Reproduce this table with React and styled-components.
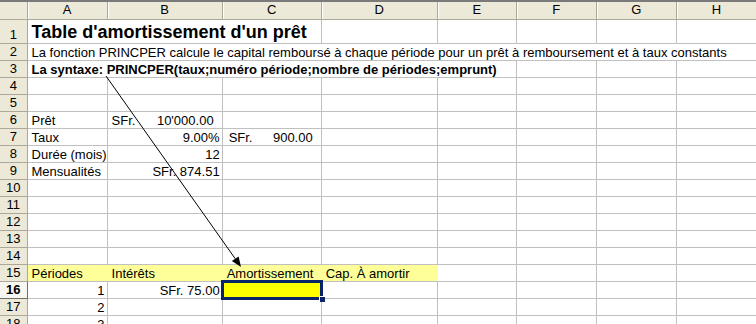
import React from "react";
import styled, { createGlobalStyle } from "styled-components";

const GlobalStyle = createGlobalStyle`
  html, body {
    margin: 0;
    padding: 0;
    background: #ffffff;
    overflow: hidden;
  }
  body {
    font-family: "Liberation Sans", Arial, sans-serif;
  }
`;

const columns = [
  { key: "A", width: 80 },
  { key: "B", width: 115 },
  { key: "C", width: 99 },
  { key: "D", width: 116 },
  { key: "E", width: 79 },
  { key: "F", width: 80 },
  { key: "G", width: 80 },
  { key: "H", width: 80 },
];

// each cell: col index, span (for text spilling into empty neighbours), content
const rows = [
  {
    n: 1,
    tall: true,
    cells: [{ col: 0, span: 3, text: "Table d'amortissement d'un prêt", size: 18, bold: true }],
  },
  {
    n: 2,
    cells: [
      {
        col: 0,
        span: 8,
        text: "La fonction PRINCPER calcule le capital remboursé à chaque période pour un prêt à remboursement et à taux constants",
      },
    ],
  },
  {
    n: 3,
    cells: [
      {
        col: 0,
        span: 5,
        bold: true,
        text: "La syntaxe: PRINCPER(taux;numéro période;nombre de périodes;emprunt)",
      },
    ],
  },
  { n: 4, cells: [] },
  { n: 5, cells: [] },
  {
    n: 6,
    cells: [
      { col: 0, text: "Prêt" },
      { col: 1, currency: "SFr.", text: "10'000.00", pad: 8 },
    ],
  },
  {
    n: 7,
    cells: [
      { col: 0, text: "Taux" },
      { col: 1, text: "9.00%", align: "right" },
      { col: 2, currency: "SFr.", text: "900.00", pad: 8, lead: 2 },
    ],
  },
  {
    n: 8,
    cells: [
      { col: 0, text: "Durée (mois)" },
      { col: 1, text: "12", align: "right" },
    ],
  },
  {
    n: 9,
    cells: [
      { col: 0, text: "Mensualités" },
      { col: 1, text: "SFr. 874.51", align: "right" },
    ],
  },
  { n: 10, cells: [] },
  { n: 11, cells: [] },
  { n: 12, cells: [] },
  { n: 13, cells: [] },
  { n: 14, cells: [] },
  {
    n: 15,
    cells: [
      { col: 0, text: "Périodes", fill: "#ffff99" },
      { col: 1, text: "Intérêts", fill: "#ffff99" },
      { col: 2, text: "Amortissement", fill: "#ffff99" },
      { col: 3, text: "Cap. À amortir", fill: "#ffff99" },
    ],
  },
  {
    n: 16,
    active: true,
    cells: [
      { col: 0, text: "1", align: "right" },
      { col: 1, text: "SFr. 75.00", align: "right" },
      { col: 2, text: "", fill: "#ffff00", selected: true },
    ],
  },
  { n: 17, cells: [{ col: 0, text: "2", align: "right" }] },
  { n: 18, cells: [{ col: 0, text: "3", align: "right" }] },
];

const Sheet = styled.div`
  position: relative;
  width: 756px;
  height: 324px;
  overflow: hidden;
  border-top: 2px solid #7a7a7a;
  box-sizing: border-box;
`;

const Grid = styled.table`
  table-layout: fixed;
  border-collapse: collapse;
  width: 757px;
  font-size: 13px;
  color: #000000;
`;

const HeadRow = styled.tr`
  height: 17px;
`;

const Corner = styled.th`
  background: #ece9d8;
  border-right: 1px solid #aca899;
  border-bottom: 1px solid #aca899;
  padding: 0;
`;

const ColHead = styled.th`
  background: #ece9d8;
  border-right: 1px solid #aca899;
  border-bottom: 1px solid #aca899;
  box-shadow: inset 1px 0 0 #ffffff;
  font-weight: normal;
  text-align: center;
  padding: 0;
  line-height: 16px;
`;

const Row = styled.tr`
  height: ${(p) => (p.$tall ? 24 : 17)}px;
`;

const RowHead = styled.th`
  background: ${(p) => (p.$active ? "#f7f6f0" : "#ece9d8")};
  border-right: 1px solid ${(p) => (p.$active ? "#716f64" : "#aca899")};
  border-bottom: 1px solid ${(p) => (p.$active ? "#716f64" : "#aca899")};
  border-top: ${(p) => (p.$active ? "1px solid #716f64" : "none")};
  font-weight: ${(p) => (p.$active ? "bold" : "normal")};
  text-align: center;
  vertical-align: bottom;
  padding: 0 0 1px;
  line-height: 15px;
`;

const Cell = styled.td`
  position: relative;
  border: 1px solid ${(p) => (p.$fill ? p.$fill : "#c0c0c0")};
  border-bottom-color: #c0c0c0;
  border-right-color: ${(p) => (p.$fill ? p.$fill : "#c0c0c0")};
  background: ${(p) => p.$fill || "transparent"};
  text-align: ${(p) => p.$align || "left"};
  font-weight: ${(p) => (p.$bold ? "bold" : "normal")};
  font-size: ${(p) => p.$size || 13}px;
  vertical-align: bottom;
  white-space: nowrap;
  overflow: ${(p) => (p.$selected ? "visible" : "hidden")};
  padding: 0 ${(p) => p.$pad ?? 2}px 0 4px;
  line-height: ${(p) => (p.$size ? 22 : 15)}px;

  ${(p) =>
    p.$selected &&
    `
    &::before {
      content: "";
      position: absolute;
      left: -2px;
      top: -2px;
      right: -2px;
      bottom: -2px;
      border: 3px solid #0a246a;
    }
    &::after {
      content: "";
      position: absolute;
      right: -4px;
      bottom: -4px;
      width: 5px;
      height: 5px;
      background: #0a246a;
      border-left: 1px solid #ffffff;
      border-top: 1px solid #ffffff;
    }
  `}
`;

const Accounting = styled.span`
  display: flex;
  justify-content: space-between;
  padding-left: ${(p) => p.$lead || 0}px;
`;

const Overlay = styled.svg`
  position: absolute;
  left: 0;
  top: -2px;
  pointer-events: none;
`;

function renderCells(row) {
  const out = [];
  let c = 0;
  while (c < columns.length) {
    const cell = row.cells.find((x) => x.col === c);
    if (!cell) {
      out.push(<Cell key={c} />);
      c += 1;
      continue;
    }
    const span = cell.span || 1;
    out.push(
      <Cell
        key={c}
        colSpan={span}
        $align={cell.align}
        $bold={cell.bold}
        $size={cell.size}
        $fill={cell.fill}
        $pad={cell.pad}
        $selected={cell.selected}
      >
        {cell.currency ? (
          <Accounting $lead={cell.lead}>
            <span>{cell.currency}</span>
            <span>{cell.text}</span>
          </Accounting>
        ) : (
          cell.text
        )}
      </Cell>
    );
    c += span;
  }
  return out;
}

export default function App() {
  return (
    <>
      <GlobalStyle />
      <Sheet>
        <Grid>
          <colgroup>
            <col style={{ width: 27 }} />
            {columns.map((col) => (
              <col key={col.key} style={{ width: col.width }} />
            ))}
          </colgroup>
          <thead>
            <HeadRow>
              <Corner />
              {columns.map((col) => (
                <ColHead key={col.key}>{col.key}</ColHead>
              ))}
            </HeadRow>
          </thead>
          <tbody>
            {rows.map((row) => (
              <Row key={row.n} $tall={row.tall}>
                <RowHead $active={row.active}>{row.n}</RowHead>
                {renderCells(row)}
              </Row>
            ))}
          </tbody>
        </Grid>
        <Overlay width="756" height="324" viewBox="0 0 756 324">
          <line x1="106" y1="76" x2="235.3" y2="258.8" stroke="#000" strokeWidth="1" />
          <polygon points="241,267 231.9,261.1 238.6,256.4" fill="#000" />
        </Overlay>
      </Sheet>
    </>
  );
}
